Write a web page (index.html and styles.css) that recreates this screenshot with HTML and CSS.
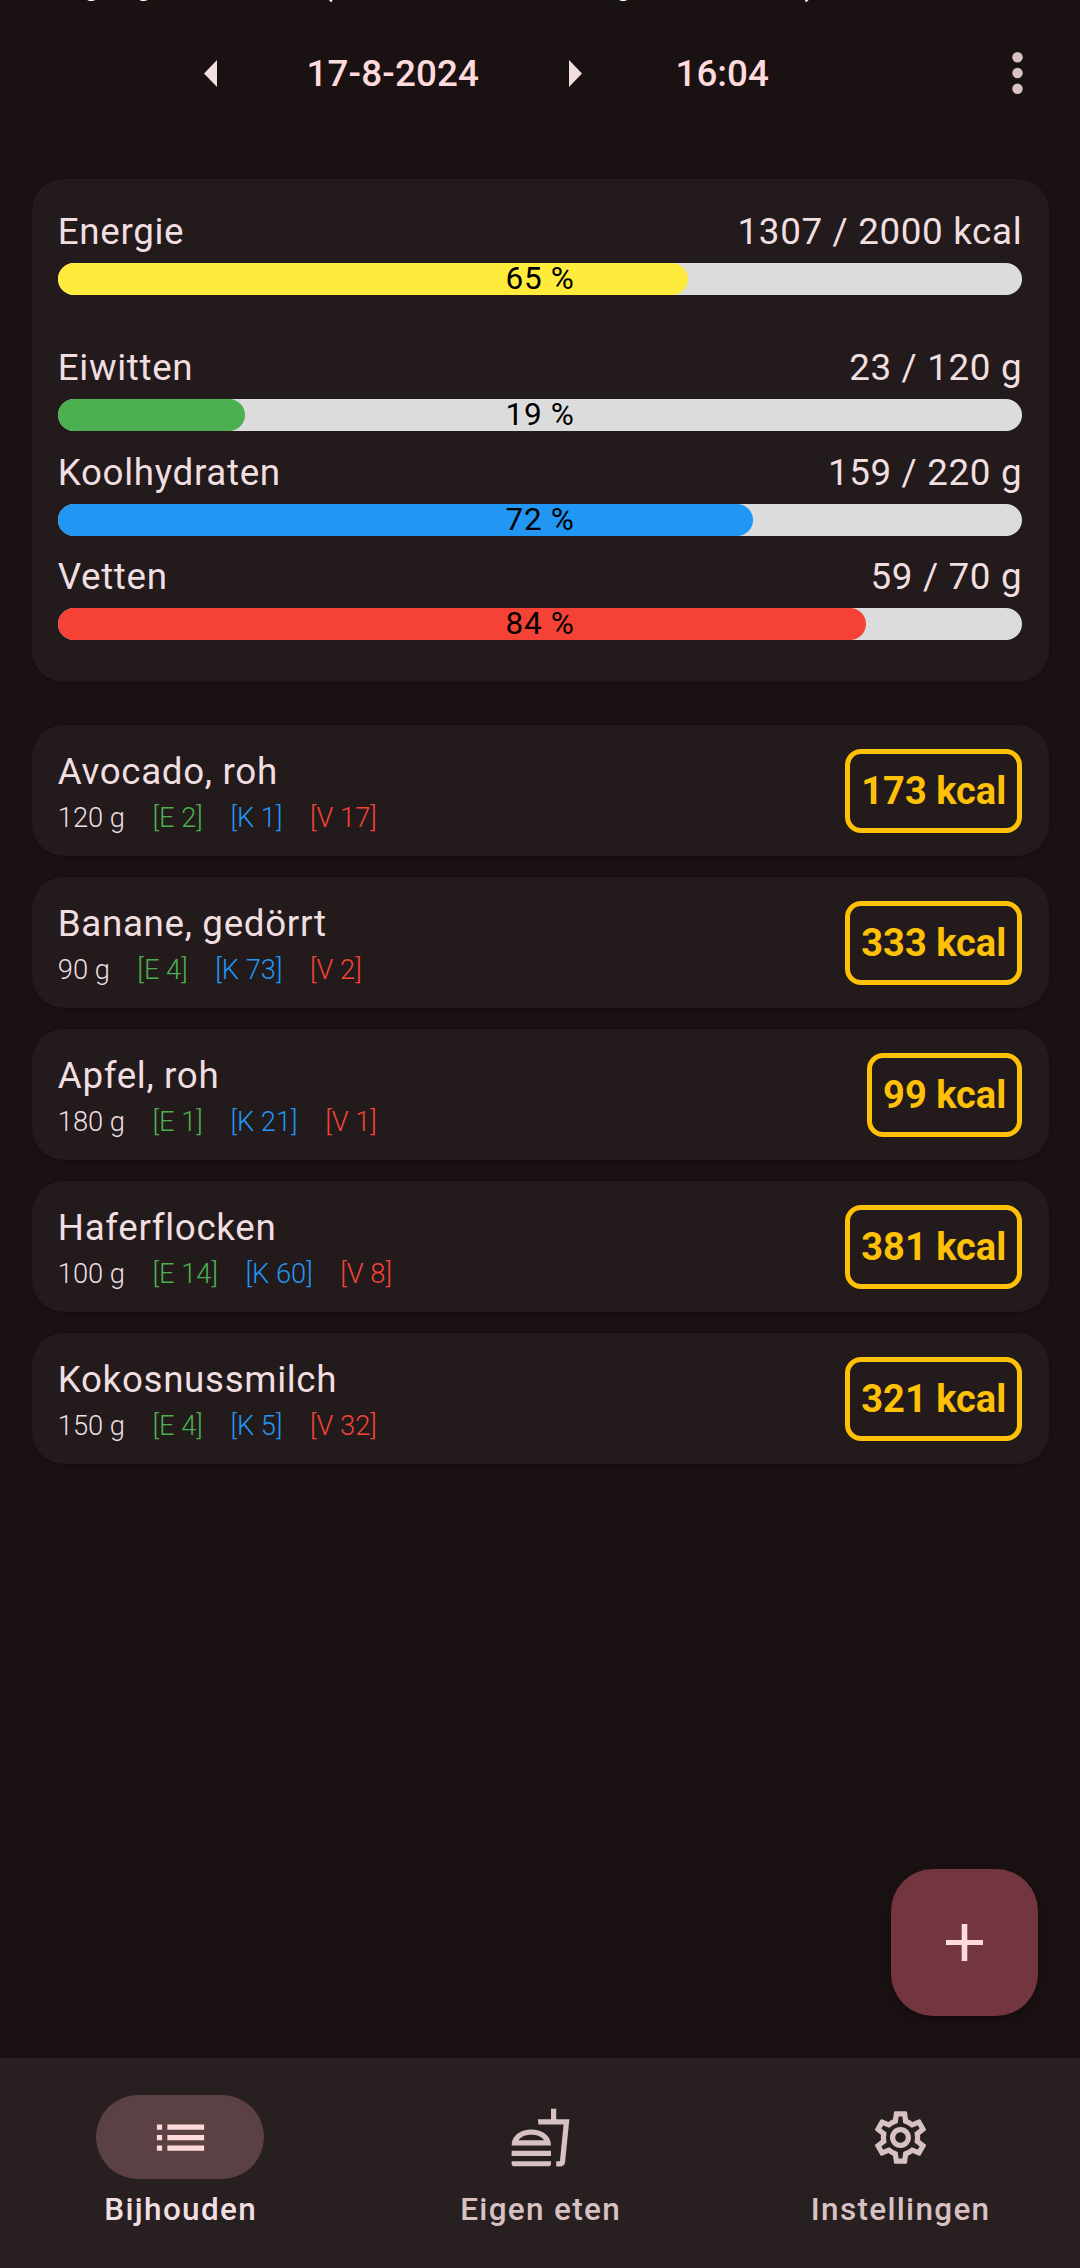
FILE: index.html
```html
<!DOCTYPE html>
<html lang="nl">
<head>
<meta charset="utf-8">
<title>Bijhouden</title>
<link rel="stylesheet" href="styles.css">
</head>
<body>
<div class="app">
  <main class="content">
    <div class="clipped-title"><span>Vergangen kalender (alle datum van het agenda inhoud)</span></div>
    <header class="topbar">
      <svg class="tri" viewBox="0 0 13 27"><path d="M13 0V27L0 13.5Z"/></svg>
      <span class="date">17-8-2024</span>
      <svg class="tri" viewBox="0 0 13 27"><path d="M0 0V27L13 13.5Z"/></svg>
      <span class="time">16:04</span>
      <svg class="dots" viewBox="0 0 11 42"><circle cx="5.5" cy="5.25" r="5.25"/><circle cx="5.5" cy="21" r="5.25"/><circle cx="5.5" cy="36.75" r="5.25"/></svg>
    </header>

    <section class="summary">
      <div class="metric metric-main">
        <div class="metric-line"><span>Energie</span><span>1307 / 2000 kcal</span></div>
        <div class="bar"><div class="fill yellow" style="width:65.35%"></div><span class="pct">65 %</span></div>
      </div>
      <div class="metric">
        <div class="metric-line"><span>Eiwitten</span><span>23 / 120 g</span></div>
        <div class="bar"><div class="fill green" style="width:19.4%"></div><span class="pct">19 %</span></div>
      </div>
      <div class="metric">
        <div class="metric-line"><span>Koolhydraten</span><span>159 / 220 g</span></div>
        <div class="bar"><div class="fill blue" style="width:72.1%"></div><span class="pct">72 %</span></div>
      </div>
      <div class="metric">
        <div class="metric-line"><span>Vetten</span><span>59 / 70 g</span></div>
        <div class="bar"><div class="fill red" style="width:83.8%"></div><span class="pct">84 %</span></div>
      </div>
    </section>

    <section class="foods">
      <article class="food">
        <div class="food-info">
          <div class="food-name">Avocado, roh</div>
          <div class="food-meta"><span>120 g</span><span class="e">[E 2]</span><span class="k">[K 1]</span><span class="v">[V 17]</span></div>
        </div>
        <div class="kcal">173 kcal</div>
      </article>
      <article class="food">
        <div class="food-info">
          <div class="food-name">Banane, gedörrt</div>
          <div class="food-meta"><span>90 g</span><span class="e">[E 4]</span><span class="k">[K 73]</span><span class="v">[V 2]</span></div>
        </div>
        <div class="kcal">333 kcal</div>
      </article>
      <article class="food">
        <div class="food-info">
          <div class="food-name">Apfel, roh</div>
          <div class="food-meta"><span>180 g</span><span class="e">[E 1]</span><span class="k">[K 21]</span><span class="v">[V 1]</span></div>
        </div>
        <div class="kcal">99 kcal</div>
      </article>
      <article class="food">
        <div class="food-info">
          <div class="food-name">Haferflocken</div>
          <div class="food-meta"><span>100 g</span><span class="e">[E 14]</span><span class="k">[K 60]</span><span class="v">[V 8]</span></div>
        </div>
        <div class="kcal">381 kcal</div>
      </article>
      <article class="food">
        <div class="food-info">
          <div class="food-name">Kokosnussmilch</div>
          <div class="food-meta"><span>150 g</span><span class="e">[E 4]</span><span class="k">[K 5]</span><span class="v">[V 32]</span></div>
        </div>
        <div class="kcal">321 kcal</div>
      </article>
    </section>

    <button class="fab" aria-label="Toevoegen">
      <svg viewBox="0 0 37 37"><path d="M15.7 0h5.6v15.9H37v5.2H21.3V37h-5.6V21.1H0v-5.2h15.7z"/></svg>
    </button>
  </main>

  <nav class="nav">
    <div class="nav-item active">
      <div class="nav-icon">
        <svg viewBox="0 0 24 24"><path d="M3 13h2v-2H3v2zm0 4h2v-2H3v2zm0-8h2V7H3v2zm4 4h14v-2H7v2zm0 4h14v-2H7v2zM7 7v2h14V7H7z"/></svg>
      </div>
      <span class="nav-label">Bijhouden</span>
    </div>
    <div class="nav-item">
      <div class="nav-icon">
        <svg viewBox="0 0 24 24"><path d="M1 21.98c0 .56.45 1.01 1.01 1.01H15c.56 0 1.01-.45 1.01-1.01V21H1v.98zM8.5 8.99C4.75 8.99 1 11 1 15h15c0-4-3.75-6.01-7.5-6.01zM3.62 13c1.11-1.55 3.47-2.01 4.88-2.01s3.77.46 4.88 2.01H3.62zM1 17h15v2H1zM18 5V1h-2v4h-5l.23 2h9.56l-1.4 14H18v2h1.72c.84 0 1.53-.65 1.63-1.47L23 5h-5z"/></svg>
      </div>
      <span class="nav-label">Eigen eten</span>
    </div>
    <div class="nav-item">
      <div class="nav-icon">
        <svg viewBox="0 0 24 24"><path d="M19.43 12.98c.04-.32.07-.64.07-.98 0-.34-.03-.66-.07-.98l2.11-1.65c.19-.15.24-.42.12-.64l-2-3.46c-.09-.16-.26-.25-.44-.25-.06 0-.12.01-.17.03l-2.49 1c-.52-.4-1.08-.73-1.69-.98l-.38-2.65C14.46 2.18 14.25 2 14 2h-4c-.25 0-.46.18-.49.42l-.38 2.65c-.61.25-1.17.59-1.69.98l-2.49-1c-.06-.02-.12-.03-.18-.03-.17 0-.34.09-.43.25l-2 3.46c-.13.22-.07.49.12.64l2.11 1.65c-.04.32-.07.65-.07.98 0 .33.03.66.07.98l-2.11 1.65c-.19.15-.24.42-.12.64l2 3.46c.09.16.26.25.44.25.06 0 .12-.01.17-.03l2.49-1c.52.4 1.08.73 1.69.98l.38 2.65c.03.24.24.42.49.42h4c.25 0 .46-.18.49-.42l.38-2.65c.61-.25 1.17-.59 1.69-.98l2.49 1c.06.02.12.03.18.03.17 0 .34-.09.43-.25l2-3.46c.12-.22.07-.49-.12-.64l-2.11-1.65zm-1.98-1.71c.04.31.05.52.05.73 0 .21-.02.43-.05.73l-.14 1.13.89.7 1.08.84-.7 1.21-1.27-.51-1.04-.42-.9.68c-.43.32-.84.56-1.25.73l-1.06.43-.16 1.13-.2 1.35h-1.4l-.19-1.35-.16-1.13-1.06-.43c-.43-.18-.83-.41-1.23-.71l-.91-.7-1.06.43-1.27.51-.7-1.21 1.08-.84.89-.7-.14-1.13c-.03-.31-.05-.54-.05-.74s.02-.43.05-.73l.14-1.13-.89-.7-1.08-.84.7-1.21 1.27.51 1.04.42.9-.68c.43-.32.84-.56 1.25-.73l1.06-.43.16-1.13.2-1.35h1.39l.19 1.35.16 1.13 1.06.43c.43.18.83.41 1.23.71l.91.7 1.06-.43 1.27-.51.7 1.21-1.07.85-.89.7.14 1.13zM12 8c-2.21 0-4 1.79-4 4s1.79 4 4 4 4-1.79 4-4-1.79-4-4-4zm0 6c-1.1 0-2-.9-2-2s.9-2 2-2 2 .9 2 2-.9 2-2 2z"/></svg>
      </div>
      <span class="nav-label">Instellingen</span>
    </div>
  </nav>
</div>
</body>
</html>
```

FILE: styles.css
```css
* { box-sizing: border-box; }

html, body {
  margin: 0;
  padding: 0;
  background: #1a1112;
}

body {
  font-family: Roboto, "Liberation Sans", sans-serif;
  color: #f0dee0;
}

.app {
  width: 1080px;
  height: 2268px;
  display: flex;
  flex-direction: column;
  overflow: hidden;
}

.content {
  flex: 1;
  position: relative;
  display: flex;
  flex-direction: column;
}

.clipped-title {
  height: 3px;
  overflow: hidden;
  display: flex;
  align-items: flex-end;
  padding-left: 36px;
  font-size: 31.5px;
  line-height: 37px;
  white-space: nowrap;
  color: #ffffff;
}

.clipped-title span {
  flex: none;
}

.topbar {
  height: 142px;
  display: flex;
  align-items: center;
  padding-left: 204px;
  padding-bottom: 1px;
}

.tri {
  width: 13px;
  height: 27px;
  fill: #f0dee0;
  flex: none;
}

.date, .time {
  font-size: 36.75px;
  font-weight: 500;
  color: #ffdadc;
}

.date {
  margin: 0 90px 0 89.5px;
  letter-spacing: 0.15px;
}

.time { margin-left: 93.5px; }

.dots {
  width: 11px;
  height: 42px;
  fill: #d7c1c3;
  margin-left: 243.5px;
  margin-bottom: 2px;
  flex: none;
}

.summary {
  margin: 34px 31.5px 0;
  padding: 26px 26.25px 42px;
  background: #221a1b;
  border-radius: 31.5px;
  box-shadow: 0 1px 3px rgba(0, 0, 0, 0.25);
}

.metric { margin-bottom: 15px; }
.metric:last-child { margin-bottom: 0; }
.metric-main { margin-bottom: 47px; }

.metric-line {
  height: 57.5px;
  padding-bottom: 5px;
  display: flex;
  justify-content: space-between;
  align-items: center;
  font-size: 36.75px;
  letter-spacing: 0.66px;
}

.bar {
  position: relative;
  height: 32px;
  background: #dcdcdc;
  border-radius: 16px;
  display: flex;
  justify-content: center;
  align-items: center;
}

.fill {
  position: absolute;
  left: 0;
  top: 0;
  bottom: 0;
  border-radius: 16px;
}

.yellow { background: #ffeb3b; }
.green { background: #4caf50; }
.blue { background: #2196f3; }
.red { background: #f44336; }

.pct {
  position: relative;
  font-size: 31.5px;
  line-height: 32px;
  letter-spacing: 0.65px;
  color: #000;
}

.foods {
  margin: 43px 31.5px 0;
  display: flex;
  flex-direction: column;
  gap: 21px;
}

.food {
  height: 131px;
  padding: 0 26.25px;
  background: #221a1b;
  border-radius: 31.5px;
  box-shadow: 0 1px 3px rgba(0, 0, 0, 0.25);
  display: flex;
  justify-content: space-between;
  align-items: center;
}

.food-info {
  display: flex;
  flex-direction: column;
  padding-top: 1px;
}

.food-name {
  font-size: 36.75px;
  line-height: 52px;
  letter-spacing: 0.66px;
}

.food-meta {
  display: flex;
  gap: 27.5px;
  margin-top: 1.5px;
  font-size: 27.3px;
  line-height: 36px;
  font-weight: 300;
}

.e { color: #4caf50; }
.k { color: #2196f3; }
.v { color: #f44336; }

.kcal {
  height: 84px;
  padding: 0 11px;
  border: 5px solid #ffc107;
  border-radius: 16px;
  display: flex;
  align-items: center;
  font-size: 38px;
  font-weight: 700;
  color: #ffc107;
}

.fab {
  position: absolute;
  left: 891px;
  top: 1869px;
  width: 147px;
  height: 147px;
  padding: 0;
  border: 0;
  border-radius: 42px;
  background: #733640;
  box-shadow: 0 4px 10px rgba(0, 0, 0, 0.3);
  display: flex;
  align-items: center;
  justify-content: center;
}

.fab svg {
  width: 37px;
  height: 37px;
  fill: #ffdadc;
}

.nav {
  height: 210px;
  flex: none;
  background: #271f20;
  display: grid;
  grid-template-columns: repeat(3, 1fr);
  padding-top: 37px;
}

.nav-item {
  display: flex;
  flex-direction: column;
  align-items: center;
}

.nav-icon {
  width: 168px;
  height: 84px;
  border-radius: 42px;
  display: flex;
  align-items: center;
  justify-content: center;
}

.nav-icon svg {
  width: 63px;
  height: 63px;
  fill: #d7c1c3;
}

.nav-label {
  margin-top: 10px;
  padding-left: 1.3px;
  font-size: 31.5px;
  line-height: 42px;
  font-weight: 500;
  letter-spacing: 1.31px;
  color: #d7c1c3;
}

.active .nav-icon { background: #5c4144; }
.active .nav-icon svg { fill: #ffdadc; }
.active .nav-label { color: #f0dee0; }
```
